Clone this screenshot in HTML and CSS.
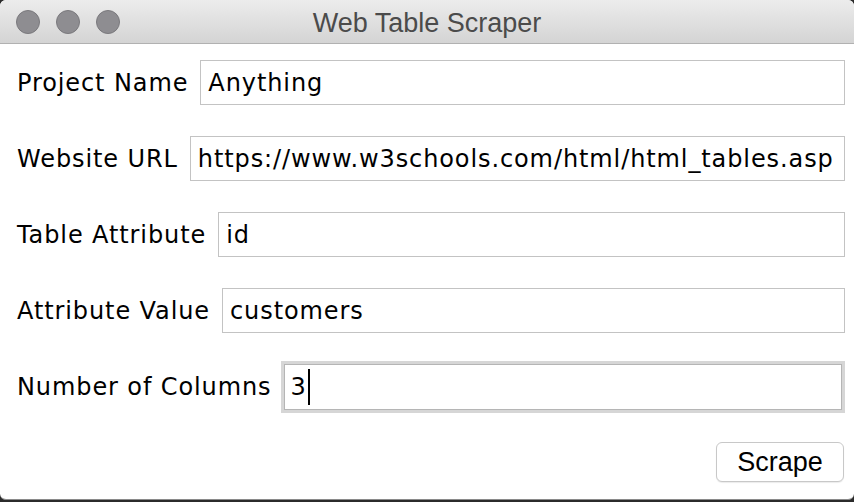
FILE: index.html
```html
<!DOCTYPE html>
<html>
<head>
<meta charset="utf-8">
<link rel="stylesheet" href="styles.css">
</head>
<body>
<div class="window">
  <div class="titlebar">
    <div class="lights">
      <span class="light"></span>
      <span class="light"></span>
      <span class="light"></span>
    </div>
    <div class="title">Web Table Scraper</div>
  </div>
  <div class="content">
    <div class="row">
      <span class="label">Project Name</span>
      <div class="field">Anything</div>
    </div>
    <div class="row">
      <span class="label">Website URL</span>
      <div class="field">https://www.w3schools.com/html/html_tables.asp</div>
    </div>
    <div class="row">
      <span class="label">Table Attribute</span>
      <div class="field">id</div>
    </div>
    <div class="row">
      <span class="label">Attribute Value</span>
      <div class="field">customers</div>
    </div>
    <div class="row">
      <span class="label">Number of Columns</span>
      <div class="field focus">3<span class="caret"></span></div>
    </div>
    <div class="actions">
      <div class="button">Scrape</div>
    </div>
  </div>
</div>
</body>
</html>
```

FILE: styles.css
```css
html, body {
  margin: 0;
  padding: 0;
}
body {
  width: 854px;
  height: 502px;
  background: #2b2b2b;
  overflow: hidden;
}
.window {
  width: 854px;
  height: 500px;
  background: #ffffff;
  border-radius: 6px 6px 6px 6px;
  border-bottom: 1px solid #8a8a8a;
  box-sizing: border-box;
  display: flex;
  flex-direction: column;
  overflow: hidden;
}
.titlebar {
  height: 43px;
  flex: none;
  background: linear-gradient(#ececec, #d4d4d4);
  border-bottom: 1px solid #b1b1b1;
  position: relative;
  display: flex;
  align-items: center;
  justify-content: center;
}
.lights {
  position: absolute;
  left: 16px;
  top: 10px;
  display: flex;
  gap: 16px;
}
.light {
  width: 22px;
  height: 22px;
  border-radius: 50%;
  background: #8e8d91;
  border: 1px solid #7a797d;
}
.title {
  font-family: "Liberation Sans", Arial, sans-serif;
  font-size: 27px;
  color: #4b4b4b;
  margin-top: 3px;
}
.content {
  flex: 1;
  display: flex;
  flex-direction: column;
  padding: 16px 9px 0 17px;
  font-family: "DejaVu Sans", sans-serif;
  font-size: 24px;
  letter-spacing: 0.9px;
  color: #000;
}
.row {
  display: flex;
  align-items: center;
  gap: 12px;
  height: 45px;
  margin-bottom: 31px;
}
.label {
  white-space: nowrap;
}
.field {
  flex: 1;
  height: 45px;
  box-sizing: border-box;
  border: 1px solid #c3c3c3;
  padding: 0 7px;
  display: flex;
  align-items: center;
  white-space: nowrap;
  overflow: hidden;
}
.field.focus {
  border: 1px solid #b5b5b5;
  box-shadow: 0 0 0 3px #d6d6d6;
  height: 46px;
  margin-right: 3px;
  margin-left: 0;
  padding-left: 6px;
}
.caret {
  display: inline-block;
  width: 2px;
  height: 36px;
  background: #000;
  margin-left: 1px;
}
.actions {
  display: flex;
  justify-content: flex-end;
  margin-top: 2px;
}
.button {
  width: 128px;
  height: 40px;
  box-sizing: border-box;
  border: 1px solid #c8c8c8;
  border-radius: 6px;
  background: #fff;
  box-shadow: 0 1px 1px rgba(0,0,0,0.08);
  font-family: "Liberation Sans", Arial, sans-serif;
  font-size: 27px;
  letter-spacing: 0;
  display: flex;
  align-items: center;
  justify-content: center;
  margin-right: 1px;
}
```
